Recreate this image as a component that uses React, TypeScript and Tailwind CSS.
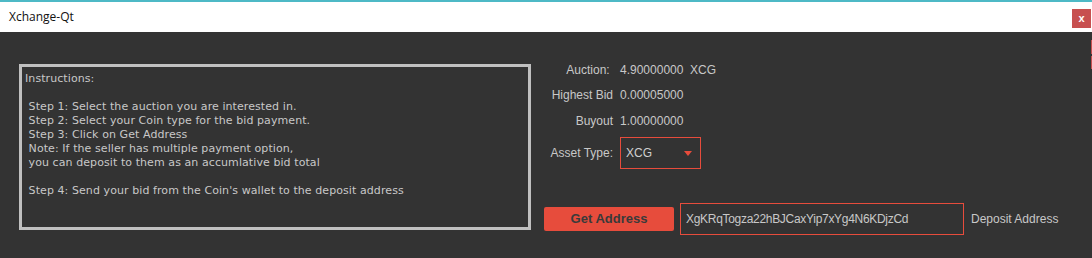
import React from 'react';

const font = { fontFamily: '"Liberation Sans", Arial, sans-serif' };
const titleFont = { fontFamily: '"Open Sans", "Liberation Sans", sans-serif' };
const boxFont = { fontFamily: '"DejaVu Sans", "Liberation Sans", sans-serif' };

const steps = [
  'Instructions:',
  '',
  ' Step 1: Select the auction you are interested in.',
  ' Step 2: Select your Coin type for the bid payment.',
  ' Step 3: Click on Get Address',
  ' Note: If the seller has multiple payment option,',
  ' you can deposit to them as an accumlative bid total',
  '',
  ' Step 4: Send your bid from the Coin\'s wallet to the deposit address',
];

const InfoRow = ({ label, value, className }: any) => (
  <div className={`flex items-center h-[20px] ${className || ''}`}>
    <div className="w-[69px] text-right whitespace-pre">{label}</div>
    <div className="ml-[7px] whitespace-pre">{value}</div>
  </div>
);

export default function App() {
  return (
    <div className="w-[1092px] h-[258px] bg-[#333333] flex flex-col overflow-hidden text-[12px]" style={font}>
      <div className="h-[2px] bg-[#4db9c6]" />
      <div className="h-[30px] bg-white flex justify-between">
        <span className="pl-[9px] pt-[7px] text-[12px] text-[#111] leading-[16px]" style={titleFont}>Xchange-Qt</span>
        <div className="mt-[7px] mr-[1px] w-[19px] h-[19px] bg-[#c75050] flex items-center justify-center text-white font-bold text-[11px] leading-none">x</div>
      </div>

      <div className="flex-1 flex relative">
        <div className="ml-[19px] mt-[32px] w-[512px] h-[166px] border-[3px] border-[#c0c0c0] pl-[3px] pt-[5px] text-[#c8c8c8] text-[11px] leading-[14px] tracking-[0.08px]" style={boxFont}>
          {steps.map((s, i) => (
            <div key={i} className="whitespace-pre h-[14px]">{s}</div>
          ))}
        </div>

        <div className="ml-[13px] pt-[28px] flex flex-col text-[#c8c8c8]">
          <InfoRow label="Auction: " value="4.90000000  XCG" />
          <InfoRow label="Highest Bid" value="0.00005000" className="mt-[5px]" />
          <InfoRow label="Buyout" value="1.00000000" className="mt-[6px]" />
          <div className="flex items-center mt-[6px]">
            <div className="w-[69px] text-right">Asset Type:</div>
            <div className="ml-[7px] w-[81px] h-[32px] border border-[#e74c3c] flex items-center justify-between pl-[5px] pr-[8px]">
              <span className="text-[#d0d0d0]">XCG</span>
              <svg width="8" height="5" viewBox="0 0 8 5"><path d="M0 0 L8 0 L4 5 Z" fill="#e74c3c" /></svg>
            </div>
          </div>

          <div className="flex items-center mt-[34px]">
            <button className="w-[130px] h-[24px] bg-[#e74c3c] rounded-[2px] text-[#3a3a3a] font-bold text-[13px]">Get Address</button>
            <div className="ml-[6px] w-[284px] h-[32px] border border-[#e74c3c] flex items-center pl-[5px] text-[#c8c8c8] tracking-[-0.3px]">XgKRqTogza22hBJCaxYip7xYg4N6KDjzCd</div>
            <span className="ml-[7px] text-[#c8c8c8]">Deposit Address</span>
          </div>
        </div>

        <div className="absolute right-0 top-[8px] w-[1px] h-[14px] bg-[#c75050]" />
        <div className="absolute right-0 top-[24px] w-[1px] h-[13px] bg-[#c75050]" />
      </div>
    </div>
  );
}
